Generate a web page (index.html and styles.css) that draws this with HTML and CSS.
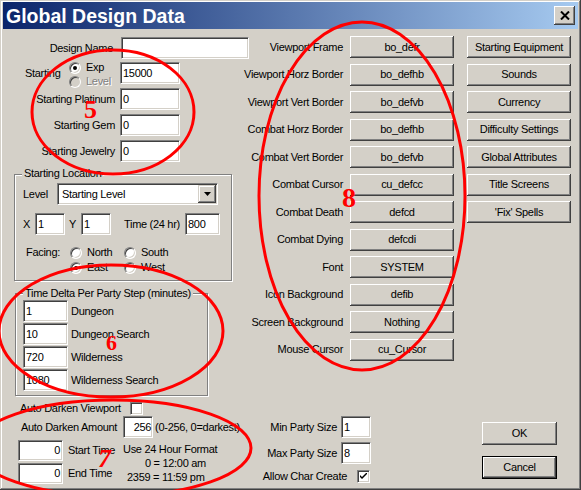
FILE: index.html
```html
<!DOCTYPE html>
<html>
<head>
<meta charset="utf-8">
<title>Global Design Data</title>
<link rel="stylesheet" href="styles.css">
</head>
<body>
<div class="window">
  <div class="titlebar">
    <span class="title">Global Design Data</span>
    <div class="close"><svg width="10" height="9" viewBox="0 0 10 9"><path d="M1 0.5 L9 8.5 M9 0.5 L1 8.5" stroke="#000" stroke-width="2" fill="none"/></svg></div>
  </div>
  <div class="content">
    <div class="col-left">
      <div class="frow r-first"><div class="lbl lbl-dn">Design Name</div><div class="tb w-name"></div></div>
      <div class="frow r-start">
        <div class="starting">Starting</div>
        <div class="rstack">
          <div class="ropt"><span class="radio on"></span><span>Exp</span></div>
          <div class="ropt"><span class="radio dis"></span><span class="distext">Level</span></div>
        </div>
        <div class="tb w-num">15000</div>
      </div>
      <div class="frow r-next"><div class="lbl">Starting Platinum</div><div class="tb w-num">0</div></div>
      <div class="frow r-next"><div class="lbl">Starting Gem</div><div class="tb w-num">0</div></div>
      <div class="frow r-next"><div class="lbl">Starting Jewelry</div><div class="tb w-num">0</div></div>

      <div class="group g-loc">
        <div class="gtitle">Starting Location</div>
        <div class="lrow">
          <div class="l-level">Level</div>
          <div class="combo"><span class="ctext">Starting Level</span><span class="cbtn"><svg width="7" height="4" viewBox="0 0 7 4"><path d="M0 0 H7 L3.5 4 Z" fill="#000"/></svg></span></div>
        </div>
        <div class="lrow xy">
          <div class="l-x">X</div><div class="tb w-xy">1</div>
          <div class="l-y">Y</div><div class="tb w-xy">1</div>
          <div class="l-time">Time (24 hr)</div><div class="tb w-time">800</div>
        </div>
        <div class="facing">
          <div class="f-lbl">Facing:</div>
          <div class="ropt"><span class="radio"></span><span>North</span></div>
          <div class="ropt"><span class="radio"></span><span>South</span></div>
          <div></div>
          <div class="ropt"><span class="radio on"></span><span>East</span></div>
          <div class="ropt"><span class="radio"></span><span>West</span></div>
        </div>
      </div>

      <div class="group g-delta">
        <div class="gtitle">Time Delta Per Party Step (minutes)</div>
        <div class="drow"><div class="tb w-delta">1</div><span>Dungeon</span></div>
        <div class="drow"><div class="tb w-delta">10</div><span>Dungeon Search</span></div>
        <div class="drow"><div class="tb w-delta">720</div><span>Wilderness</span></div>
        <div class="drow"><div class="tb w-delta">1080</div><span>Wilderness Search</span></div>
      </div>

      <div class="adv-row"><span>Auto Darken Viewport</span><span class="check"></span></div>
      <div class="ada-row"><span>Auto Darken Amount</span><div class="tb w-xy right r1">256</div><span class="note">(0-256, 0=darkest)</span></div>
      <div class="times">
        <div class="tcol">
          <div class="trow"><div class="tb w-t right">0</div><span>Start Time</span></div>
          <div class="trow"><div class="tb w-t right">0</div><span>End Time</span></div>
        </div>
        <div class="fmt">
          <div class="f1">Use 24 Hour Format</div>
          <div class="f2">0 = 12:00 am</div>
          <div class="f3">2359 = 11:59 pm</div>
        </div>
      </div>
    </div>

    <div class="col-mid">
      <div class="mgrid">
        <div class="mlbl">Viewport Frame</div><div class="btn">bo_defr</div>
        <div class="mlbl">Viewport Horz Border</div><div class="btn">bo_defhb</div>
        <div class="mlbl">Viewport Vert Border</div><div class="btn">bo_defvb</div>
        <div class="mlbl">Combat Horz Border</div><div class="btn">bo_defhb</div>
        <div class="mlbl">Combat Vert Border</div><div class="btn">bo_defvb</div>
        <div class="mlbl">Combat Cursor</div><div class="btn">cu_defcc</div>
        <div class="mlbl">Combat Death</div><div class="btn">defcd</div>
        <div class="mlbl">Combat Dying</div><div class="btn">defcdi</div>
        <div class="mlbl">Font</div><div class="btn">SYSTEM</div>
        <div class="mlbl">Icon Background</div><div class="btn">defib</div>
        <div class="mlbl">Screen Background</div><div class="btn">Nothing</div>
        <div class="mlbl">Mouse Cursor</div><div class="btn">cu_Cursor</div>
      </div>
      <div class="pgrid">
        <div class="mlbl">Min Party Size</div><div class="tb w-xy">1</div>
        <div class="mlbl">Max Party Size</div><div class="tb w-xy">8</div>
      </div>
      <div class="allow"><span class="allow-lbl">Allow Char Create</span><span class="check"><svg width="7" height="7" viewBox="0 0 7 7"><path d="M0 2 L0 4 L2 6 L7 1 L7 -1 L2 4 Z" fill="#000"/></svg></span></div>
    </div>

    <div class="col-right">
      <div class="rbtns">
        <div class="btn">Starting Equipment</div>
        <div class="btn">Sounds</div>
        <div class="btn">Currency</div>
        <div class="btn">Difficulty Settings</div>
        <div class="btn">Global Attributes</div>
        <div class="btn">Title Screens</div>
        <div class="btn">'Fix' Spells</div>
      </div>
      <div class="btn okc ok">OK</div>
      <div class="btn okc cancel">Cancel</div>
    </div>
  </div>

  <svg class="marks" width="581" height="490" viewBox="0 0 581 490">
    <g fill="none" stroke="#ff0000" stroke-width="3">
      <ellipse cx="113" cy="112" rx="81" ry="62"/>
      <ellipse cx="111" cy="331" rx="112" ry="66"/>
      <ellipse cx="113" cy="448" rx="138" ry="48"/>
      <ellipse cx="362" cy="196" rx="103" ry="174"/>
    </g>
    <g fill="#ff0000" font-family="Liberation Serif, serif" font-weight="bold">
      <text x="84" y="118" font-size="26">5</text>
      <text x="106" y="350" font-size="22">6</text>
      <text x="98" y="467" font-size="26" font-style="italic">7</text>
      <text x="342" y="207" font-size="28">8</text>
    </g>
  </svg>
</div>
</body>
</html>
```

FILE: styles.css
```css
* { box-sizing: border-box; }
html, body { margin: 0; padding: 0; background: #D4D0C8; }
body {
  font-family: "Liberation Sans", Arial, sans-serif;
  font-size: 11px;
  line-height: 13px;
  letter-spacing: -0.3px;
  color: #000;
}
.window {
  position: relative;
  width: 581px;
  height: 490px;
  background: #D4D0C8;
  padding: 2px 3px 3px 3px;
  box-shadow: inset -1px -1px #404040, inset 1px 1px #D4D0C8, inset -2px -2px #808080, inset 2px 2px #fff;
  overflow: hidden;
}
.titlebar {
  height: 27px;
  display: flex;
  align-items: center;
  justify-content: space-between;
  padding: 0 3px 0 3px;
  background: linear-gradient(to right, #0A246A, #A6CAF0);
}
.title {
  color: #fff;
  font-weight: bold;
  font-size: 19.5px;
  line-height: 22px;
  letter-spacing: 0;
}
.close {
  width: 21px;
  height: 19px;
  display: flex;
  align-items: center;
  justify-content: center;
  background: #D4D0C8;
  box-shadow: inset -1px -1px #404040, inset 1px 1px #fff, inset -2px -2px #808080, inset 2px 2px #D4D0C8;
}
.content {
  display: grid;
  grid-template-columns: 237px 220px 118px;
  height: 458px;
}

/* generic controls */
.tb {
  height: 22px;
  background: #fff;
  border: 1px solid;
  border-color: #808080 #fff #fff #808080;
  box-shadow: inset 1px 1px #404040, inset -1px -1px #D4D0C8;
  padding: 0 2px;
  display: flex;
  align-items: center;
  white-space: nowrap;
  overflow: hidden;
  flex: none;
}
.tb.right { justify-content: flex-end; padding-right: 2px; }
.tb.r1 { padding-right: 1px; }
.btn {
  height: 22px;
  display: flex;
  align-items: center;
  justify-content: center;
  background: #D4D0C8;
  white-space: nowrap;
  box-shadow: inset -1px -1px #404040, inset 1px 1px #fff, inset -2px -2px #808080, inset 2px 2px #D4D0C8;
}
.radio {
  width: 12px;
  height: 12px;
  border-radius: 50%;
  background: #fff;
  border: 1px solid;
  border-color: #808080 #fff #fff #808080;
  box-shadow: inset 1px 1px #404040, inset -1px -1px #D4D0C8;
  display: flex;
  align-items: center;
  justify-content: center;
  flex: none;
}
.radio.on::after {
  content: "";
  width: 4px;
  height: 4px;
  border-radius: 50%;
  background: #000;
}
.radio.dis { background: #D4D0C8; }
.distext { color: #808080; text-shadow: 1px 1px 0 #fff; }
.ropt { display: flex; align-items: center; gap: 5px; height: 14px; white-space: nowrap; }
.check {
  width: 13px;
  height: 13px;
  background: #fff;
  border: 1px solid;
  border-color: #808080 #fff #fff #808080;
  box-shadow: inset 1px 1px #404040, inset -1px -1px #D4D0C8;
  display: flex;
  align-items: center;
  justify-content: center;
  flex: none;
}

/* left column */
.col-left { display: flex; flex-direction: column; }
.frow { display: flex; align-items: center; height: 22px; }
.r-first { margin-top: 8px; }
.r-start { margin-top: 3px; }
.r-next { margin-top: 4px; }
.lbl { width: 117px; text-align: right; padding-right: 5px; white-space: nowrap; flex: none; }
.lbl-dn { width: 118px; padding-right: 8px; }
.w-name { width: 128px; }
.w-num { width: 60px; }
.starting { margin-left: 22px; width: 44px; flex: none; }
.rstack { width: 51px; flex: none; display: flex; flex-direction: column; margin-top: 3px; }

.group {
  border: 1px solid #808080;
  box-shadow: inset 1px 1px #fff, 1px 1px 0 #fff;
}
.gtitle {
  width: max-content;
  height: 13px;
  line-height: 13px;
  padding: 0 2px;
  background: #D4D0C8;
  white-space: nowrap;
}
.g-loc {
  margin: 12px 0 0 11px;
  width: 218px;
  padding: 8px 0 5px 8px;
}
.g-loc .gtitle { margin: -16px 0 3px -1px; }
.lrow { display: flex; align-items: center; height: 22px; }
.xy { margin-top: 8px; }
.l-level { width: 34px; flex: none; }
.combo {
  width: 161px;
  height: 22px;
  background: #fff;
  border: 1px solid;
  border-color: #808080 #fff #fff #808080;
  box-shadow: inset 1px 1px #404040, inset -1px -1px #D4D0C8;
  display: flex;
  align-items: center;
  padding: 1px 1px 1px 4px;
}
.ctext { flex: 1; }
.cbtn {
  width: 18px;
  height: 18px;
  display: flex;
  align-items: center;
  justify-content: center;
  background: #D4D0C8;
  box-shadow: inset -1px -1px #404040, inset 1px 1px #D4D0C8, inset -2px -2px #808080, inset 2px 2px #fff;
}
.l-x { width: 12px; flex: none; }
.w-xy { width: 30px; }
.l-y { width: 12px; margin-left: 4px; flex: none; }
.l-time { margin-left: 13px; width: 61px; flex: none; white-space: nowrap; }
.w-time { width: 35px; }
.facing {
  margin-top: 10px;
  display: grid;
  grid-template-columns: 47px 54px auto;
  grid-auto-rows: 15px;
  align-items: center;
}
.f-lbl { padding-left: 3px; }

.g-delta {
  margin: 12px 0 0 12px;
  width: 193px;
  padding: 6px 0 4px 7px;
  display: flex;
  flex-direction: column;
  gap: 1px;
}
.g-delta .gtitle { margin: -13px 0 -1px 0; }
.drow { display: flex; align-items: center; gap: 3px; height: 22px; white-space: nowrap; }
.w-delta { width: 45px; }

.adv-row {
  margin: 5px 0 0 17px;
  height: 14px;
  display: flex;
  align-items: center;
  gap: 9px;
  white-space: nowrap;
}
.ada-row {
  margin: 1px 0 0 18px;
  height: 22px;
  display: flex;
  align-items: center;
  white-space: nowrap;
}
.ada-row .tb { margin-left: 6px; }
.note { margin-left: 2px; }
.times { margin-top: 2px; display: flex; }
.tcol { margin-left: 15px; width: 102px; display: flex; flex-direction: column; gap: 2px; }
.trow { display: flex; align-items: center; gap: 5px; height: 21px; white-space: nowrap; }
.w-t { width: 45px; height: 21px; }
.fmt { margin-top: 2px; line-height: 14px; white-space: nowrap; }
.f1 { padding-left: 3px; }
.f2 { padding-left: 25px; }
.f3 { padding-left: 7px; }

/* middle column */
.col-mid { display: flex; flex-direction: column; }
.mgrid {
  margin-top: 7px;
  display: grid;
  grid-template-columns: 103px 104px;
  column-gap: 7px;
  row-gap: 5.5px;
  grid-auto-rows: 22px;
}
.mlbl { text-align: right; white-space: nowrap; align-self: center; }
.pgrid {
  margin-top: 55.5px;
  display: grid;
  grid-template-columns: 97px 30px;
  column-gap: 4px;
  row-gap: 4px;
  grid-auto-rows: 22px;
}
.allow { margin-top: 5px; height: 14px; display: flex; align-items: center; gap: 10px; }
.allow-lbl { width: 107px; text-align: right; white-space: nowrap; }

/* right column */
.col-right { display: flex; flex-direction: column; }
.rbtns { margin: 7px 0 0 7px; display: flex; flex-direction: column; gap: 5.5px; }
.rbtns .btn { width: 104px; }
.okc { width: 75px; height: 23px; margin-left: 22px; }
.ok { margin-top: 199px; }
.cancel {
  margin-top: 11px;
  box-shadow: inset 0 0 0 1px #000, inset -2px -2px #404040, inset 2px 2px #fff, inset -3px -3px #808080;
}

.marks {
  position: absolute;
  left: 0;
  top: 0;
  pointer-events: none;
}
```
